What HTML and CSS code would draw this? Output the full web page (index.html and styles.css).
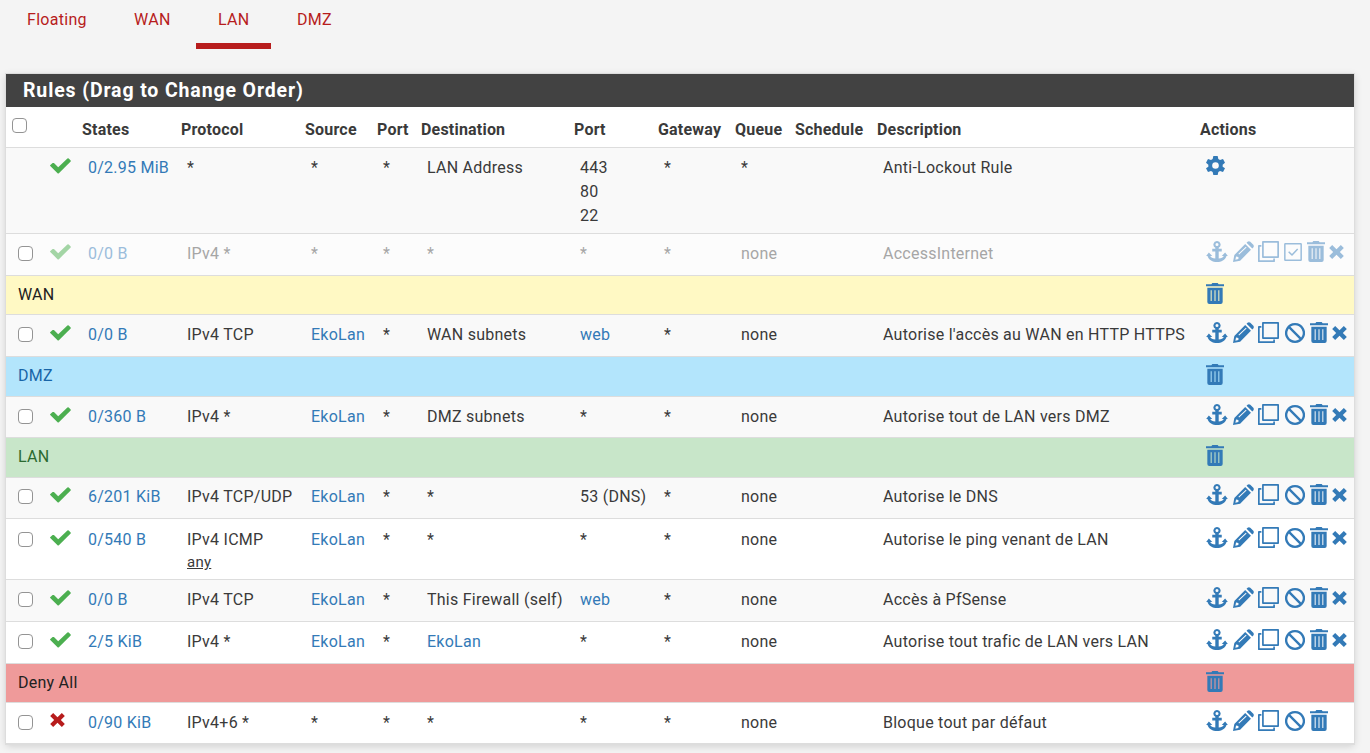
FILE: index.html
```html
<!DOCTYPE html>
<html lang="fr">
<head>
<meta charset="utf-8">
<title>Firewall Rules: LAN</title>
<link rel="stylesheet" href="styles.css">
</head>
<body>
<svg class="sprite" aria-hidden="true">
  <symbol id="check" viewBox="0 0 64 48"><path d="M0 23Q0 21 2 20L8 15Q10 14 12 15L25 28L53 1Q55 0 57 1L63 7Q64 9 63 10L27 46Q25 48 23 46Z"/></symbol>
  <symbol id="times" viewBox="0 0 44 42"><path d="M0 9 L9 0 L22 13 L35 0 L44 9 L32 21 L44 33 L35 42 L22 29 L9 42 L0 33 L12 21 Z"/></symbol>
  <symbol id="anchor" viewBox="0 0 64 62"><path fill-rule="evenodd" d="M32 0a10.500 10.500 0 0 1 5 19.800V23H46V31H37V52C45 51 50 48 52 44L46 44L56 34L64 44H60C56 56 45 62 32 62S8 56 4 44H0L8 34L18 44H12C14 48 19 51 27 52V31H18V23H27V19.800A10.500 10.500 0 0 1 32 0ZM32 6a4.500 4.500 0 1 0 0 9a4.500 4.500 0 0 0 0-9Z"/></symbol>
  <symbol id="pencil" viewBox="0 0 62 62"><path fill-rule="evenodd" d="M36 9L53 26L21 58L0 62L4 41ZM9 46L7 55L16 53L16 47ZM16 38L18 40L40 19L38 17ZM40 5L43 2Q47 -1 51 2L60 11Q63 15 60 19L57 22Z"/></symbol>
  <symbol id="clone" viewBox="0 0 62 62"><path fill="none" stroke="currentColor" stroke-width="5" stroke-linejoin="round" d="M14.500 2.500H59.500V47.500H14.500ZM10 14.500H2.500V59.500H47.500V52"/></symbol>
  <symbol id="ban" viewBox="0 0 60 60"><path fill="none" stroke="currentColor" stroke-width="7" d="M30 3.500a26.500 26.500 0 1 0 .1 0ZM11 11L49 49"/></symbol>
  <symbol id="enable" viewBox="0 0 54 54"><path fill="none" stroke="currentColor" stroke-width="4.500" d="M4 2.500H50Q51.500 2.500 51.500 4V50Q51.500 51.500 50 51.500H4Q2.500 51.500 2.500 50V4Q2.500 2.500 4 2.500ZM14 26L24 36L41 18"/></symbol>
  <symbol id="trash" viewBox="0 0 54 63"><path fill-rule="evenodd" d="M0 4H16L19 0H35L38 4H54V10H0ZM4 14H50V57Q50 63 44 63H10Q4 63 4 57ZM14 22V54H17V22ZM25.500 22V54H28.500V22ZM37 22V54H40V22Z"/></symbol>
  <symbol id="cog" viewBox="0 0 57 57"><path fill-rule="evenodd" d="M22 0H35L37 9L42 12L51 9L57 20L50 26V32L57 37L51 48L42 45L37 48L35 57H22L20 48L15 45L6 48L0 37L7 32V26L0 20L6 9L15 12L20 9ZM28.500 18.500a10 10 0 1 0 0 20a10 10 0 0 0 0-20Z"/></symbol>
</svg>
<nav class="tabs">
  <a class="tab tab-floating">Floating</a><a class="tab tab-wan">WAN</a><a class="tab tab-lan active">LAN</a><a class="tab tab-dmz">DMZ</a>
</nav>
<section class="panel">
<h2 class="title"><span class="t">Rules (Drag to Change Order)</span></h2>
<table class="rules">
<colgroup><col class="c-box"><col class="c-icon"><col class="c-states"><col class="c-proto"><col class="c-source"><col class="c-sport"><col class="c-dest"><col class="c-dport"><col class="c-gate"><col class="c-queue"><col class="c-sched"><col class="c-desc"><col class="c-act"></colgroup>
<thead><tr class="head"><th><input type="checkbox"></th><th></th><th>States</th><th>Protocol</th><th>Source</th><th>Port</th><th>Destination</th><th>Port</th><th>Gateway</th><th>Queue</th><th>Schedule</th><th>Description</th><th>Actions</th></tr></thead>
<tbody>
<tr class="tall odd"><td></td><td><svg class="check"><use href="#check"/></svg></td><td><a>0/2.95 MiB</a></td><td>*</td><td>*</td><td>*</td><td>LAN Address</td><td>443<br>80<br>22</td><td>*</td><td>*</td><td></td><td>Anti-Lockout Rule</td><td><svg class="cog"><use href="#cog"/></svg></td></tr>
<tr class="disabled h42"><td><input type="checkbox"></td><td><svg class="check"><use href="#check"/></svg></td><td><a>0/0 B</a></td><td>IPv4 *</td><td>*</td><td>*</td><td>*</td><td>*</td><td>*</td><td>none</td><td></td><td>AccessInternet</td><td><div class="actions"><svg class="anchor"><use href="#anchor"/></svg><svg class="pencil"><use href="#pencil"/></svg><svg class="clone"><use href="#clone"/></svg><svg class="enable"><use href="#enable"/></svg><svg class="trash"><use href="#trash"/></svg><svg class="times"><use href="#times"/></svg></div></td></tr>
<tr class="sep h39 yellow"><td colspan="12">WAN</td><td><svg class="trash"><use href="#trash"/></svg></td></tr>
<tr class="odd h42"><td><input type="checkbox"></td><td><svg class="check"><use href="#check"/></svg></td><td><a>0/0 B</a></td><td>IPv4 TCP</td><td><a>EkoLan</a></td><td>*</td><td>WAN subnets</td><td><a>web</a></td><td>*</td><td>none</td><td></td><td>Autorise l'accès au WAN en HTTP HTTPS</td><td><div class="actions"><svg class="anchor"><use href="#anchor"/></svg><svg class="pencil"><use href="#pencil"/></svg><svg class="clone"><use href="#clone"/></svg><svg class="ban"><use href="#ban"/></svg><svg class="trash"><use href="#trash"/></svg><svg class="times"><use href="#times"/></svg></div></td></tr>
<tr class="sep h40 blue"><td colspan="12">DMZ</td><td><svg class="trash"><use href="#trash"/></svg></td></tr>
<tr class="odd h41"><td><input type="checkbox"></td><td><svg class="check"><use href="#check"/></svg></td><td><a>0/360 B</a></td><td>IPv4 *</td><td><a>EkoLan</a></td><td>*</td><td>DMZ subnets</td><td>*</td><td>*</td><td>none</td><td></td><td>Autorise tout de LAN vers DMZ</td><td><div class="actions"><svg class="anchor"><use href="#anchor"/></svg><svg class="pencil"><use href="#pencil"/></svg><svg class="clone"><use href="#clone"/></svg><svg class="ban"><use href="#ban"/></svg><svg class="trash"><use href="#trash"/></svg><svg class="times"><use href="#times"/></svg></div></td></tr>
<tr class="sep h40 green"><td colspan="12">LAN</td><td><svg class="trash"><use href="#trash"/></svg></td></tr>
<tr class="odd h41 tight"><td><input type="checkbox"></td><td><svg class="check"><use href="#check"/></svg></td><td><a>6/201 KiB</a></td><td>IPv4 TCP/UDP</td><td><a>EkoLan</a></td><td>*</td><td>*</td><td>53 (DNS)</td><td>*</td><td>none</td><td></td><td>Autorise le DNS</td><td><div class="actions"><svg class="anchor"><use href="#anchor"/></svg><svg class="pencil"><use href="#pencil"/></svg><svg class="clone"><use href="#clone"/></svg><svg class="ban"><use href="#ban"/></svg><svg class="trash"><use href="#trash"/></svg><svg class="times"><use href="#times"/></svg></div></td></tr>
<tr class="h61"><td><input type="checkbox"></td><td><svg class="check"><use href="#check"/></svg></td><td><a>0/540 B</a></td><td>IPv4 ICMP<br><u>any</u></td><td><a>EkoLan</a></td><td>*</td><td>*</td><td>*</td><td>*</td><td>none</td><td></td><td>Autorise le ping venant de LAN</td><td><div class="actions"><svg class="anchor"><use href="#anchor"/></svg><svg class="pencil"><use href="#pencil"/></svg><svg class="clone"><use href="#clone"/></svg><svg class="ban"><use href="#ban"/></svg><svg class="trash"><use href="#trash"/></svg><svg class="times"><use href="#times"/></svg></div></td></tr>
<tr class="odd h42"><td><input type="checkbox"></td><td><svg class="check"><use href="#check"/></svg></td><td><a>0/0 B</a></td><td>IPv4 TCP</td><td><a>EkoLan</a></td><td>*</td><td>This Firewall (self)</td><td><a>web</a></td><td>*</td><td>none</td><td></td><td>Accès à PfSense</td><td><div class="actions"><svg class="anchor"><use href="#anchor"/></svg><svg class="pencil"><use href="#pencil"/></svg><svg class="clone"><use href="#clone"/></svg><svg class="ban"><use href="#ban"/></svg><svg class="trash"><use href="#trash"/></svg><svg class="times"><use href="#times"/></svg></div></td></tr>
<tr class="h42"><td><input type="checkbox"></td><td><svg class="check"><use href="#check"/></svg></td><td><a>2/5 KiB</a></td><td>IPv4 *</td><td><a>EkoLan</a></td><td>*</td><td><a>EkoLan</a></td><td>*</td><td>*</td><td>none</td><td></td><td>Autorise tout trafic de LAN vers LAN</td><td><div class="actions"><svg class="anchor"><use href="#anchor"/></svg><svg class="pencil"><use href="#pencil"/></svg><svg class="clone"><use href="#clone"/></svg><svg class="ban"><use href="#ban"/></svg><svg class="trash"><use href="#trash"/></svg><svg class="times"><use href="#times"/></svg></div></td></tr>
<tr class="sep h39 red"><td colspan="12">Deny All</td><td><svg class="trash"><use href="#trash"/></svg></td></tr>
<tr class="h41"><td><input type="checkbox"></td><td><svg class="times block"><use href="#times"/></svg></td><td><a>0/90 KiB</a></td><td>IPv4+6 *</td><td>*</td><td>*</td><td>*</td><td>*</td><td>*</td><td>none</td><td></td><td>Bloque tout par défaut</td><td><div class="actions"><svg class="anchor"><use href="#anchor"/></svg><svg class="pencil"><use href="#pencil"/></svg><svg class="clone"><use href="#clone"/></svg><svg class="ban"><use href="#ban"/></svg><svg class="trash"><use href="#trash"/></svg></div></td></tr>
</tbody>
</table>
</section>
</body>
</html>
```
FILE: styles.css
```css
* { box-sizing: border-box; }
body { margin: 0; height: 753px; overflow: hidden; background: #f4f4f4; color: #3a3a3a; font: 16px/24px Roboto, sans-serif; }
.sprite { display: none; }
svg { display: block; fill: currentColor; }

.tabs { display: flex; height: 49px; padding-left: 6px; letter-spacing: .3px; }
.tab { padding: 8px 21px 0; height: 49px; font-size: 16px; white-space: nowrap; }
.tab-floating { width: 107px; }
.tab-wan { width: 83px; }
.tab-lan { width: 75px; padding-left: 22px; border-bottom: 6px solid #b71c1c; }
.tab-dmz { padding-left: 26px; }

.panel { width: 1348px; margin: 25px 0 0 6px; background: #fff; box-shadow: 0 0 0 1px #ddd, 0 2px 8px rgba(0,0,0,.16); }
.title { margin: 0; height: 33px; padding: 5px 0 0 17px; background: #424242; color: #fff; font-size: 19.5px; line-height: 24px; font-weight: 700; letter-spacing: .87px; white-space: nowrap; }

.rules { width: 1348px; border-collapse: separate; border-spacing: 0; table-layout: fixed; font-size: 16px; letter-spacing: .25px; }
.c-box { width: 38px; } .c-icon { width: 34px; } .c-states { width: 99px; } .c-proto { width: 124px; }
.c-source { width: 72px; } .c-sport { width: 44px; } .c-dest { width: 153px; } .c-dport { width: 84px; }
.c-gate { width: 77px; } .c-queue { width: 60px; } .c-sched { width: 82px; } .c-desc { width: 323px; } .c-act { width: 158px; }
th, td { padding: 0 0 0 4px; text-align: left; vertical-align: top; white-space: nowrap; border-bottom: 1px solid #ddd; }
th { padding-top: 11px; font-weight: 700; letter-spacing: .2px; }
td { padding: 8px 0 0 10px; }
th:first-child { padding-left: 6px; }
td:first-child { padding-left: 12px; }
td:nth-child(2) { padding-left: 6px; }
a { color: #337ab7; }
.tab { color: #b71c1c; }
u { display: block; margin-top: -2px; font-size: 15px; }
input { display: block; appearance: none; width: 15px; height: 15px; margin: 4px 0 0; border: 1px solid #949494; border-radius: 4px; background: #fff; }
th input { margin-top: 0; }

.head { height: 41px; }
.tall { height: 86px; }
.h39 { height: 39px; }
.h40 { height: 40px; }
.h41 { height: 41px; }
.h42 { height: 42px; }
.h61 { height: 61px; }
.h61 td { padding-top: 9px; }
.tight td { padding-top: 7px; }
.odd { background: #f9f9f9; }
.disabled { background: #fcfcfc; color: #a6a6a6; }
.disabled a { color: #9bbddb; }
.disabled .check { opacity: .5; }
.sep { color: #212121; }
.sep td { padding-top: 7px; }
.sep td:last-child { padding: 7px 0 0 10px; }
.yellow { background: #fff9c4; }
.blue { background: #b3e5fc; color: #1865a8; }
.green { background: #c8e6c9; color: #2b6a30; }
.red { background: #ef9a9a; }

.actions { display: flex; align-items: center; height: 19px; }
td:last-child svg { color: #337ab7; }
.disabled td:last-child svg { color: #9bbddb; }
.check { width: 21px; height: 16px; color: #4caf50; margin-top: 2px; }
.times { width: 15px; height: 14px; }
td .block { margin: 2px 0 0; color: #b71c1c; }
.anchor { width: 22px; height: 21px; }
.pencil { width: 21px; height: 21px; margin-left: 5px; }
.clone { width: 21px; height: 21px; margin-left: 4px; }
.ban { width: 20px; height: 20px; margin-left: 6px; }
.enable { width: 18px; height: 18px; margin-left: 5px; }
.trash { width: 18px; height: 21px; }
.actions .trash { margin-left: 5px; }
.actions .times { margin-left: 4px; }
.cog { width: 19px; height: 19px; }
```
